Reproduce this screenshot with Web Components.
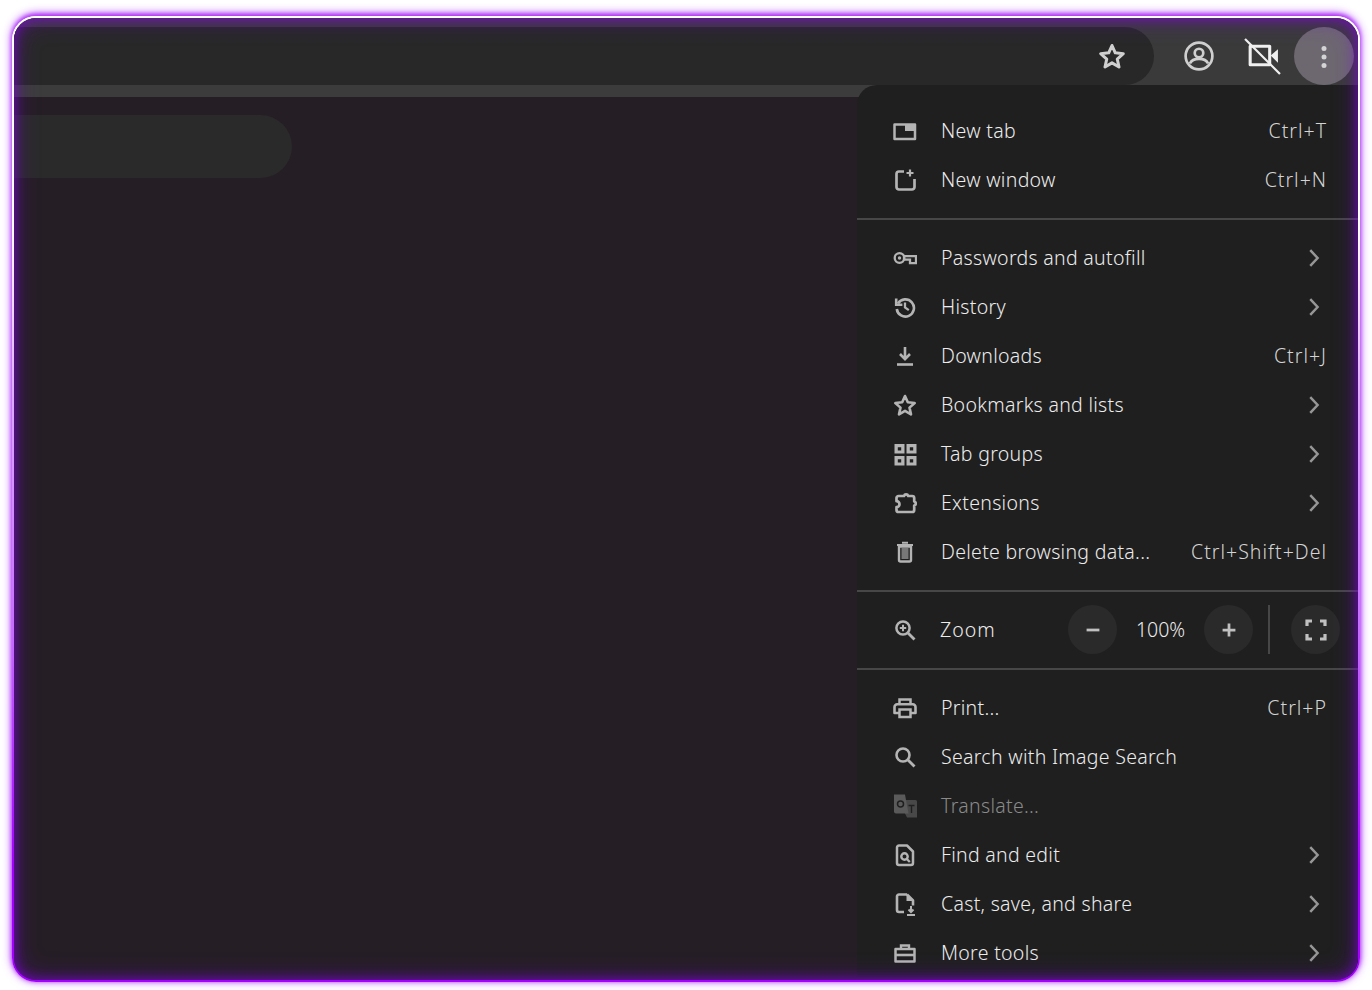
<!DOCTYPE html>
<html lang="en">
<head>
<meta charset="utf-8">
<title>Browser menu</title>
<style>
  html, body { margin: 0; height: 100%; background: #fff; overflow: hidden; }
  body { font-family: "Noto Sans", "Liberation Sans", sans-serif; }
</style>
</head>
<body>
<browser-frame>
  <browser-toolbar slot="toolbar"></browser-toolbar>
  <browser-menu slot="menu">
    <menu-item icon="newTab" shortcut="Ctrl+T">New tab</menu-item>
    <menu-item icon="newWindow" shortcut="Ctrl+N">New window</menu-item>
    <menu-separator></menu-separator>
    <menu-item icon="key" submenu>Passwords and autofill</menu-item>
    <menu-item icon="history" submenu>History</menu-item>
    <menu-item icon="download" shortcut="Ctrl+J">Downloads</menu-item>
    <menu-item icon="star" submenu>Bookmarks and lists</menu-item>
    <menu-item icon="groups" submenu>Tab groups</menu-item>
    <menu-item icon="puzzle" submenu>Extensions</menu-item>
    <menu-item icon="trash" shortcut="Ctrl+Shift+Del">Delete browsing data...</menu-item>
    <menu-separator></menu-separator>
    <zoom-row></zoom-row>
    <menu-separator></menu-separator>
    <menu-item icon="print" shortcut="Ctrl+P">Print...</menu-item>
    <menu-item icon="search">Search with Image Search</menu-item>
    <menu-item icon="translate" disabled>Translate...</menu-item>
    <menu-item icon="find" submenu>Find and edit</menu-item>
    <menu-item icon="cast" submenu>Cast, save, and share</menu-item>
    <menu-item icon="tools" submenu>More tools</menu-item>
  </browser-menu>
</browser-frame>

<script>
const ICONS = {
  newTab: '<path d="M1.5 5.5h20.5v14.5H1.5z" fill="none" stroke="currentColor" stroke-width="2.5" stroke-linejoin="round"/><path d="M12 5h10v7H12z" fill="currentColor"/>',
  newWindow: '<path d="M11 3.5H6a2.5 2.5 0 0 0-2.5 2.5v13A2.5 2.5 0 0 0 6 21.5h13a2.5 2.5 0 0 0 2.5-2.5v-8" fill="none" stroke="currentColor" stroke-width="2.7"/><path d="M17 1.5v7M13.5 5h7" fill="none" stroke="currentColor" stroke-width="2.2"/>',
  key: '<circle cx="6.5" cy="12" r="4.8" fill="none" stroke="currentColor" stroke-width="2.3"/><circle cx="6.5" cy="12" r="1.7" fill="currentColor"/><path d="M11 10.2h12v7h-6v-3.5h-6z" fill="none" stroke="currentColor" stroke-width="2.3"/>',
  history: '<path d="M5 8.5A8.6 8.6 0 1 1 3.8 14" fill="none" stroke="currentColor" stroke-width="2.6"/><path d="M3.2 3.6v6.2h6.2" fill="none" stroke="currentColor" stroke-width="2.6"/><path d="M12 7.5v5l3.8 2.6" fill="none" stroke="currentColor" stroke-width="2.3"/>',
  download: '<path d="M12 3v12M7 10l5 5.2 5-5.2" fill="none" stroke="currentColor" stroke-width="2.6"/><path d="M4 20.5h16" fill="none" stroke="currentColor" stroke-width="2.6"/>',
  star: '<path d="M12 3l2.8 6.3 6.9.7-5.2 4.6 1.5 6.8-6-3.5-6 3.5 1.5-6.8-5.2-4.6 6.9-.7z" fill="none" stroke="currentColor" stroke-width="2.6" stroke-linejoin="round"/>',
  groups: '<path fill-rule="evenodd" fill="currentColor" d="M1.5 2h10v9.5h-10zM4.8 5.2v3.2h3.4V5.2zM13.5 2h10v9.5h-10zM16.8 5.2v3.2h3.4V5.2zM1.5 14h10v9.5h-10zM4.8 17.2v3.2h3.4v-3.2zM13.5 14h10v9.5h-10zM16.8 17.2v3.2h3.4v-3.2z"/>',
  puzzle: '<path d="M8 5h3a2.2 2.2 0 0 1 4.2 0h4a2 2 0 0 1 2 2v3.4a2.2 2.2 0 0 1 0 4.2V19a2 2 0 0 1-2 2H5.5a2 2 0 0 1-2-2v-2.8a3 3 0 0 0 0-6V7a2 2 0 0 1 2-2z" fill="none" stroke="currentColor" stroke-width="2.7" stroke-linejoin="round"/>',
  trash: '<path d="M6 6.5h12V20a1.5 1.5 0 0 1-1.5 1.5h-9A1.5 1.5 0 0 1 6 20z" fill="none" stroke="currentColor" stroke-width="2.4"/><path d="M4 5h16M9 2.8h6" fill="none" stroke="currentColor" stroke-width="2.1"/><path d="M8.5 8h7v11h-7z" fill="currentColor" opacity=".6"/>',
  zoom: '<circle cx="10" cy="10" r="6.6" fill="none" stroke="currentColor" stroke-width="2.5"/><path d="M15 15l6.5 6.5" stroke="currentColor" stroke-width="2.8" fill="none"/><path d="M10 6.8v6.4M6.8 10h6.4" stroke="currentColor" stroke-width="2" fill="none"/>',
  print: '<path d="M6.5 8V3.5h11V8" fill="none" stroke="currentColor" stroke-width="2.5"/><path d="M6 17H1.5v-6a2.7 2.7 0 0 1 2.700-2.700h15.600a2.700 2.700 0 0 1 2.700 2.700v6H18" fill="none" stroke="currentColor" stroke-width="2.6" stroke-linejoin="round"/><path d="M6.5 13.5h11v7.500h-11z" fill="none" stroke="currentColor" stroke-width="2.5"/>',
  search: '<circle cx="10" cy="10" r="6.5" fill="none" stroke="currentColor" stroke-width="2.6"/><path d="M15 15l6.5 6.5" stroke="currentColor" stroke-width="2.8" fill="none"/>',
  translate: '<path d="M1 .5h11l3.500 19H3a2 2 0 0 1-2-2z" fill="currentColor"/><path d="M12 6h10.500a1.500 1.500 0 0 1 1.500 1.500V23.500H14l-2-4z" fill="currentColor" opacity=".7"/><circle cx="7.500" cy="10" r="3" fill="none" stroke="#1f1f1f" stroke-width="1.500"/><path d="M15.500 11.500h6M18.500 11v8" stroke="#1f1f1f" stroke-width="1.400" fill="none"/>',
  find: '<path d="M14 2.500H6a2 2 0 0 0-2 2V20a2 2 0 0 0 2 2h12a2 2 0 0 0 2-2V8.500z" fill="none" stroke="currentColor" stroke-width="2.500" stroke-linejoin="round"/><circle cx="11.500" cy="13.500" r="3.200" fill="none" stroke="currentColor" stroke-width="2.400"/><path d="M13.800 16l3 3" stroke="currentColor" stroke-width="2.400" fill="none"/>',
  cast: '<path d="M14 2.500H6a2 2 0 0 0-2 2V18a2 2 0 0 0 2 2h5M14 2.500l6 6v5" fill="none" stroke="currentColor" stroke-width="2.600" stroke-linejoin="round"/><path d="M13.500 2v7h7z" fill="currentColor"/><path d="M18 14v5.500M15.500 17.500l2.500 2.500 2.500-2.500" fill="none" stroke="currentColor" stroke-width="2"/><path d="M14 23h8" stroke="currentColor" stroke-width="2" fill="none"/>',
  tools: '<path d="M8 8V4.500h8V8" fill="none" stroke="currentColor" stroke-width="2.400"/><path d="M2.500 8h19v12.500h-19z" fill="none" stroke="currentColor" stroke-width="2.500" stroke-linejoin="round"/><path d="M2 14h20" stroke="currentColor" stroke-width="2.600" fill="none"/>',
  chevron: '<path d="M9 3.500l8 8.500-8 8.500" fill="none" stroke="currentColor" stroke-width="2.700"/>',
  minus: '<path d="M5 12h14" stroke="currentColor" stroke-width="3" fill="none"/>',
  plus: '<path d="M5 12h14M12 5v14" stroke="currentColor" stroke-width="3" fill="none"/>',
  fullscreen: '<path d="M3 8V3h5M16 3h5v5M21 16v5h-5M8 21H3v-5" fill="none" stroke="currentColor" stroke-width="3.200"/>',
  profile: '<circle cx="14" cy="14" r="12.500" fill="none" stroke="currentColor" stroke-width="2.500"/><circle cx="14" cy="11.200" r="4" fill="none" stroke="currentColor" stroke-width="2.500"/><path d="M5.500 21c1.500-3.400 5-4.300 8.500-4.300s7 .9 8.500 4.300" fill="none" stroke="currentColor" stroke-width="2.500"/>',
  camOff: '<path d="M6 8h19v18H6z" fill="none" stroke="currentColor" stroke-width="3" stroke-linejoin="round"/><path d="M26 17l7-6v13z" fill="currentColor"/><path d="M1 1l34 34" stroke="currentColor" stroke-width="2.200" fill="none"/>',
  dots: '<circle cx="12" cy="4.500" r="2.500" fill="currentColor"/><circle cx="12" cy="13" r="2.500" fill="currentColor"/><circle cx="12" cy="21.500" r="2.500" fill="currentColor"/>'
};

const svgIcon = (name, size = 24, box = 24) =>
  `<svg xmlns="http://www.w3.org/2000/svg" width="${size}" height="${size}" viewBox="0 0 ${box} ${box}" aria-hidden="true">${ICONS[name]}</svg>`;

class BrowserFrame extends HTMLElement {
  constructor() {
    super();
    this.attachShadow({ mode: 'open' });
    this.shadowRoot.innerHTML = `
      <style>
        :host { display: block; padding: 16px 12px 8px 12px; height: 990px; box-sizing: border-box; }
        .glow {
          height: 100%;
          box-sizing: border-box;
          padding: 2px;
          border-radius: 24px;
          background: linear-gradient(180deg, #fff 0, #fff 22%, #dda6ff 40%, #c468ff 65%, #a400ff 88%, #a400ff 100%);
          box-shadow: 0 -2px 4px #b02cf5, 0 -3px 10px #cf8cfb, 0 0 5px #cf80fb, 0 0 12px #e6c6fe;
        }
        .window {
          position: relative;
          height: 100%;
          overflow: hidden;
          border-radius: 22px;
          background: #251e25;
          display: flex;
          flex-direction: column;
        }
        .window::after {
          content: "";
          position: absolute;
          inset: 0;
          border-radius: 22px;
          pointer-events: none;
          box-shadow: inset 0 0 12px rgba(132, 0, 230, .7), inset 0 0 26px rgba(132, 0, 230, .4);
        }
        .bar { height: 12px; background: #3c3c3c; flex: none; }
        .content { flex: 1; padding-top: 18px; }
        .pill { width: 278px; height: 63px; background: #2a2a2a; border-radius: 0 32px 32px 0; }
        ::slotted(browser-menu) { position: absolute; top: 67px; right: 0; }
      </style>
      <div class="glow">
        <div class="window">
          <slot name="toolbar"></slot>
          <div class="bar"></div>
          <div class="content"><div class="pill"></div></div>
          <slot name="menu"></slot>
        </div>
      </div>`;
  }
}

class BrowserToolbar extends HTMLElement {
  constructor() {
    super();
    this.attachShadow({ mode: 'open' });
    this.shadowRoot.innerHTML = `
      <style>
        :host { display: flex; flex: none; height: 67px; box-sizing: border-box; padding: 9px 4px 0 0; background: #3a3a3a; color: #cfcfcf; }
        .omnibox { flex: 1; display: flex; justify-content: flex-end; align-items: center; padding-right: 28px; background: #282828; border-radius: 0 29px 29px 0; }
        .actions { display: flex; align-items: center; }
        .act { display: flex; align-items: center; justify-content: center; height: 58px; }
        .act.profile { width: 89px; }
        .act.cam { width: 38px; color: #f0f0f0; }
        .act.more { width: 60px; margin-left: 13px; border-radius: 50%; background: #6d6870; color: #d4d4d4; }
        svg { display: block; }
      </style>
      <div class="omnibox">${svgIcon('star', 28)}</div>
      <div class="actions">
        <div class="act profile">${svgIcon('profile', 30, 28)}</div>
        <div class="act cam">${svgIcon('camOff', 37, 36)}</div>
        <div class="act more">${svgIcon('dots', 24)}</div>
      </div>`;
  }
}

class BrowserMenu extends HTMLElement {
  constructor() {
    super();
    this.attachShadow({ mode: 'open' });
    this.shadowRoot.innerHTML = `
      <style>
        :host { display: block; width: 501px; box-sizing: border-box; padding-top: 21px; background: #1f1f1f; border-radius: 20px 0 0 0; }
      </style>
      <slot></slot>`;
  }
}

class MenuItem extends HTMLElement {
  constructor() {
    super();
    this.attachShadow({ mode: 'open' });
  }

  connectedCallback() {
    const shortcut = this.getAttribute('shortcut');
    const trailing = this.hasAttribute('submenu')
      ? `<span class="chevron">${svgIcon('chevron', 22)}</span>`
      : shortcut ? `<span class="shortcut">${shortcut}</span>` : '';
    this.shadowRoot.innerHTML = `
      <style>
        :host { display: flex; align-items: center; height: 49px; padding: 0 32px 0 36px; color: #ececec; font: 300 19.5px/1 "Noto Sans", "Liberation Sans", sans-serif; letter-spacing: .3px; }
        :host([disabled]) { color: #8a8a8a; }
        .icon { flex: none; width: 24px; height: 24px; margin-right: 24px; color: #b4b4b4; }
        :host([disabled]) .icon { color: #5a5a5a; }
        .label { flex: 1; white-space: nowrap; }
        .shortcut { color: #d4d4d4; letter-spacing: 1px; margin-right: -1px; }
        .chevron { color: #969696; display: flex; margin-right: 2px; }
        svg { display: block; }
      </style>
      <span class="icon">${svgIcon(this.getAttribute('icon'))}</span>
      <span class="label"><slot></slot></span>
      ${trailing}`;
  }
}

class MenuSeparator extends HTMLElement {
  constructor() {
    super();
    this.attachShadow({ mode: 'open' });
    this.shadowRoot.innerHTML = `
      <style>
        :host { display: flex; align-items: center; height: 29px; }
        div { width: 100%; height: 2px; background: #474747; }
      </style>
      <div></div>`;
  }
}

class ZoomRow extends HTMLElement {
  constructor() {
    super();
    this.attachShadow({ mode: 'open' });
    this.shadowRoot.innerHTML = `
      <style>
        :host { display: flex; align-items: center; height: 49px; padding: 0 18px 0 36px; color: #ececec; font: 300 19.5px/1 "Noto Sans", "Liberation Sans", sans-serif; }
        .icon { flex: none; width: 24px; height: 24px; margin-right: 23px; color: #b4b4b4; }
        .label { flex: 1; letter-spacing: 1px; }
        .btn { flex: none; width: 49px; height: 49px; border-radius: 50%; background: #2a2a2a; color: #c0c0c0; display: flex; align-items: center; justify-content: center; }
        .value { width: 87px; text-align: center; }
        .rule { flex: none; width: 2px; height: 49px; margin: 0 21px 0 15px; background: #474747; }
        svg { display: block; }
      </style>
      <span class="icon">${svgIcon('zoom')}</span>
      <span class="label">Zoom</span>
      <span class="btn">${svgIcon('minus', 22)}</span>
      <span class="value">100%</span>
      <span class="btn">${svgIcon('plus', 22)}</span>
      <span class="rule"></span>
      <span class="btn">${svgIcon('fullscreen', 24)}</span>`;
  }
}

customElements.define('browser-frame', BrowserFrame);
customElements.define('browser-toolbar', BrowserToolbar);
customElements.define('browser-menu', BrowserMenu);
customElements.define('menu-item', MenuItem);
customElements.define('menu-separator', MenuSeparator);
customElements.define('zoom-row', ZoomRow);
</script>
</body>
</html>
